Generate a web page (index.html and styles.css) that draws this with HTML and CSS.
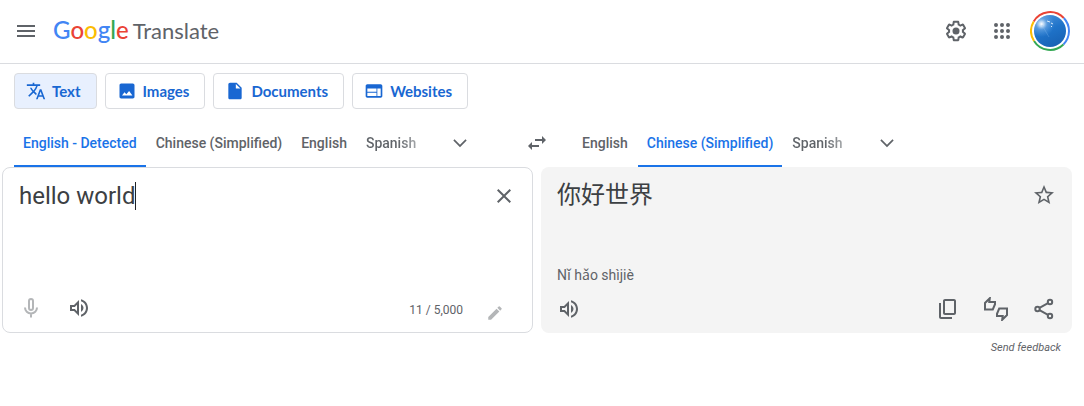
FILE: index.html
```html
<!DOCTYPE html>
<html lang="en">
<head>
<meta charset="utf-8">
<meta name="viewport" content="width=device-width, initial-scale=1">
<title>Google Translate</title>
<link rel="stylesheet" href="styles.css">
</head>
<body>
<header class="header">
  <button class="icon-button menu" aria-label="Main menu"><svg class="icon" viewBox="0 0 24 24"><path d="M3 18h18v-2H3v2zm0-5h18v-2H3v2zm0-7v2h18V6H3z"/></svg></button>
  <a class="brand" href="#"><span class="google"><span class="blue">G</span><span class="red">o</span><span class="yellow">o</span><span class="blue">g</span><span class="green">l</span><span class="red">e</span></span><span class="product">Translate</span></a>
  <div class="account">
    <button class="icon-button" aria-label="Settings"><svg class="icon" viewBox="0 0 24 24"><path d="M13.85 22.25h-3.7c-.74 0-1.36-.54-1.45-1.27l-.27-1.89c-.27-.14-.53-.29-.79-.46l-1.8.72c-.7.26-1.47-.03-1.81-.65L2.2 15.53c-.35-.66-.2-1.44.36-1.88l1.53-1.19c-.01-.15-.02-.3-.02-.46 0-.15.01-.31.02-.46l-1.52-1.19c-.59-.45-.74-1.26-.37-1.88l1.85-3.19c.34-.62 1.11-.9 1.79-.63l1.81.73c.26-.17.52-.32.78-.46l.27-1.91c.09-.7.71-1.25 1.44-1.25h3.7c.74 0 1.36.54 1.45 1.27l.27 1.89c.27.14.53.29.79.46l1.8-.72c.71-.26 1.48.03 1.82.65l1.84 3.18c.36.66.2 1.44-.36 1.88l-1.52 1.19c.01.15.02.3.02.46s-.01.31-.02.46l1.52 1.19c.56.45.72 1.23.37 1.86l-1.86 3.22c-.34.62-1.11.9-1.8.63l-1.8-.72c-.26.17-.52.32-.78.46l-.27 1.91c-.1.68-.72 1.22-1.46 1.22zm-3.23-2h2.76l.37-2.55.53-.22c.44-.18.88-.44 1.34-.78l.45-.34 2.38.96 1.38-2.4-2.03-1.58.07-.56c.03-.26.06-.51.06-.78s-.03-.53-.06-.78l-.07-.56 2.03-1.58-1.39-2.4-2.39.96-.45-.35c-.42-.32-.87-.58-1.33-.77l-.52-.22-.37-2.55h-2.76l-.37 2.55-.53.21c-.44.19-.88.44-1.34.79l-.45.33-2.38-.95-1.39 2.39 2.03 1.58-.07.56a7 7 0 0 0-.06.79c0 .26.02.53.06.78l.07.56-2.03 1.58 1.38 2.4 2.39-.96.45.35c.43.33.86.58 1.33.77l.53.22.38 2.55z"/><circle cx="12" cy="12" r="3.5"/></svg></button>
    <button class="icon-button" aria-label="Google apps"><svg class="icon" viewBox="0 0 24 24"><path d="M6 8a2 2 0 1 0 0-4 2 2 0 0 0 0 4zm6 12a2 2 0 1 0 0-4 2 2 0 0 0 0 4zm-6 0a2 2 0 1 0 0-4 2 2 0 0 0 0 4zm0-6a2 2 0 1 0 0-4 2 2 0 0 0 0 4zm6 0a2 2 0 1 0 0-4 2 2 0 0 0 0 4zm6-6a2 2 0 1 0 0-4 2 2 0 0 0 0 4zm-6 0a2 2 0 1 0 0-4 2 2 0 0 0 0 4zm6 6a2 2 0 1 0 0-4 2 2 0 0 0 0 4zm0 6a2 2 0 1 0 0-4 2 2 0 0 0 0 4z"/></svg></button>
    <button class="avatar" aria-label="Google Account">
      <svg class="avatar-picture" viewBox="0 0 40 40">
        <defs>
          <linearGradient id="sky" x1="0.2" y1="0" x2="0.65" y2="1"><stop offset="0" stop-color="#4a91da"/><stop offset="0.5" stop-color="#1f73c9"/><stop offset="1" stop-color="#1862b4"/></linearGradient>
          <radialGradient id="sun" cx="11.5" cy="13" r="13" gradientUnits="userSpaceOnUse"><stop offset="0" stop-color="#fff"/><stop offset="0.2" stop-color="#d5e9fb" stop-opacity="0.8"/><stop offset="0.45" stop-color="#8fc0f0" stop-opacity="0.4"/><stop offset="1" stop-color="#79b3ed" stop-opacity="0"/></radialGradient>
        </defs>
        <g fill="none" stroke-width="2">
          <path d="M3.7 10.5A19 19 0 0 1 33.8 7" stroke="#ea4335"/>
          <path d="M33.8 7A19 19 0 0 1 33.4 33.5" stroke="#4285f4"/>
          <path d="M33.4 33.5A19 19 0 0 1 4 30" stroke="#34a853"/>
          <path d="M4 30A19 19 0 0 1 3.7 10.5" stroke="#fbbc04"/>
        </g>
        <circle cx="20" cy="20" r="16" fill="url(#sky)"/>
        <circle cx="20" cy="20" r="16" fill="url(#sun)"/>
        <path d="M12 14l7 12" stroke="#8abdf0" stroke-opacity="0.3" fill="none"/>
        <path d="M17 10l3 1M21 12l2 1M21 15l1 1" stroke="#d8eafb" fill="none"/>
      </svg>
    </button>
  </div>
</header>

<main>
  <nav class="modes" aria-label="Translation types">
    <button class="mode mode-active"><svg class="mode-icon" viewBox="0 0 24 24"><path d="M12.87 15.07l-2.54-2.51.03-.03A17.52 17.52 0 0 0 14.07 6H17V4h-7V2H8v2H1v1.99h11.17C11.5 7.92 10.44 9.75 9 11.35 8.07 10.32 7.3 9.19 6.69 8h-2c.73 1.63 1.73 3.17 2.98 4.56l-5.09 5.02L4 19l5-5 3.11 3.11.76-2.04zM18.5 10h-2L12 22h2l1.12-3h4.75L21 22h2l-4.5-12zm-2.62 7l1.62-4.33L19.12 17h-3.24z"/></svg>Text</button>
    <button class="mode"><svg class="mode-icon" viewBox="0 0 24 24"><path d="M21 19V5c0-1.100-.9-2-2-2H5c-1.100 0-2 .9-2 2v14c0 1.100.9 2 2 2h14c1.100 0 2-.9 2-2zM6 17.500l3-4 2.200 2.500 3.300-4 4 5.500z"/></svg>Images</button>
    <button class="mode"><svg class="mode-icon" viewBox="0 0 24 24"><path d="M6 2c-1.100 0-1.990.9-1.990 2L4 20c0 1.100.89 2 1.990 2H18c1.100 0 2-.9 2-2V8l-6-6H6zm7 7V3.500L18.500 9H13z"/></svg>Documents</button>
    <button class="mode"><svg class="mode-icon" viewBox="0 0 24 24"><path d="M20 4H4c-1.100 0-1.990.9-1.990 2L2 18c0 1.100.9 2 2 2h16c1.100 0 2-.9 2-2V6c0-1.100-.9-2-2-2zm-5 14H4v-4h11v4zm0-5H4V9h11v4zm5 5h-4V9h4v9z"/></svg>Websites</button>
  </nav>

  <div class="workspace">
    <div class="languages">
      <div class="language-list">
        <button class="tab tab-active">English - Detected</button>
        <button class="tab">Chinese (Simplified)</button>
        <button class="tab">English</button>
        <button class="tab tab-fade">Spanish</button>
        <button class="icon-button more" aria-label="More source languages"><svg class="icon chevron" viewBox="0 0 24 24"><path d="M5.410 7.590L4 9l8 8 8-8-1.410-1.410L12 14.170z"/></svg></button>
      </div>
      <button class="icon-button" aria-label="Swap languages"><svg class="icon" viewBox="0 0 24 24"><path d="M6.990 11L3 15l3.990 4v-3H14v-2H6.990v-3zM21 9l-3.990-4v3H10v2h7.010v3L21 9z"/></svg></button>
      <div class="language-list">
        <button class="tab">English</button>
        <button class="tab tab-active">Chinese (Simplified)</button>
        <button class="tab tab-fade">Spanish</button>
        <button class="icon-button more" aria-label="More target languages"><svg class="icon chevron" viewBox="0 0 24 24"><path d="M5.410 7.590L4 9l8 8 8-8-1.410-1.410L12 14.170z"/></svg></button>
      </div>
    </div>

    <div class="panels">
      <section class="panel source" aria-label="Source text">
        <div class="panel-main">
          <div class="entry"><textarea class="source-text" aria-label="Source text" rows="2" spellcheck="false">hello world</textarea><span class="caret"></span></div>
          <button class="icon-button" aria-label="Clear source text"><svg class="icon" viewBox="0 0 24 24"><path d="M19 6.410L17.590 5 12 10.590 6.410 5 5 6.410 10.590 12 5 17.590 6.410 19 12 13.410 17.590 19 19 17.590 13.410 12z"/></svg></button>
        </div>
        <div class="actions">
          <button class="icon-button muted" aria-label="Translate by voice" disabled><svg class="icon" viewBox="0 0 24 24"><g fill="none" stroke="currentColor" stroke-width="2"><rect x="10" y="3" width="4" height="11" rx="2"/><path d="M6 11.500a6 6 0 0 0 12 0M12 17.500V21.500"/></g></svg></button>
          <button class="icon-button" aria-label="Listen to source text"><svg class="icon" viewBox="0 0 24 24"><path d="M3 9v6h4l5 5V4L7 9H3zm7-.17v6.34L7.83 13H5v-2h2.83L10 8.83zM16.5 12c0-1.77-1.02-3.29-2.500-4.03v8.05A4.47 4.47 0 0 0 16.500 12zM14 3.230v2.060c2.890.86 5 3.540 5 6.710s-2.110 5.850-5 6.710v2.060c4.010-.91 7-4.490 7-8.770s-2.990-7.860-7-8.770z"/></svg></button>
          <span class="counter">11 / 5,000</span>
          <button class="icon-button muted pencil" aria-label="Handwriting input"><svg class="icon-small" viewBox="0 0 24 24"><path d="M3 17.250V21h3.750L17.810 9.940l-3.750-3.750L3 17.250zM20.710 7.040a1 1 0 0 0 0-1.410l-2.340-2.340a1 1 0 0 0-1.410 0l-1.830 1.830 3.750 3.750 1.830-1.830z"/></svg></button>
        </div>
      </section>

      <section class="panel target" aria-label="Translation">
        <div class="panel-main">
          <p class="result" lang="zh-CN">你好世界</p>
          <button class="icon-button" aria-label="Save translation"><svg class="icon" viewBox="0 0 24 24"><path d="M22 9.240l-7.190-.62L12 2 9.190 8.630 2 9.240l5.460 4.730L5.820 21 12 17.270 18.180 21l-1.630-7.030L22 9.240zM12 15.400l-3.760 2.270 1-4.280-3.320-2.880 4.380-.38L12 6.100l1.710 4.040 4.380.38-3.320 2.880 1 4.280L12 15.400z"/></svg></button>
        </div>
        <p class="romanized">Nǐ hǎo shìjiè</p>
        <div class="actions">
          <button class="icon-button" aria-label="Listen to translation"><svg class="icon" viewBox="0 0 24 24"><path d="M3 9v6h4l5 5V4L7 9H3zm7-.17v6.34L7.83 13H5v-2h2.83L10 8.83zM16.5 12c0-1.77-1.02-3.29-2.500-4.03v8.05A4.47 4.47 0 0 0 16.500 12zM14 3.230v2.060c2.890.86 5 3.540 5 6.710s-2.110 5.850-5 6.710v2.060c4.010-.91 7-4.490 7-8.770s-2.990-7.860-7-8.770z"/></svg></button>
          <button class="icon-button push" aria-label="Copy translation"><svg class="icon" viewBox="0 0 24 24"><path d="M18 2H9c-1.100 0-2 .9-2 2v12c0 1.100.9 2 2 2h9c1.100 0 2-.9 2-2V4c0-1.100-.9-2-2-2zm0 14H9V4h9v12zM3 15V6h2v14h11v2H5c-1.100 0-2-.9-2-2v-5z"/></svg></button>
          <button class="icon-button" aria-label="Rate this translation"><svg class="icon" viewBox="0 0 24 24"><g fill="none" stroke="currentColor" stroke-width="2"><path d="M1 12.500V6L5.800 1.200 5.300 5H11v2.200L8.800 12.500z"/><path d="M23 11.500V18l-4.800 4.800.5-3.800H13v-2.200l2.200-5.300z"/></g></svg></button>
          <button class="icon-button" aria-label="Share translation"><svg class="icon" viewBox="0 0 24 24"><g fill="none" stroke="currentColor" stroke-width="2"><circle cx="5.500" cy="12" r="2.200"/><circle cx="18" cy="5" r="2.200"/><circle cx="18" cy="19" r="2.200"/><path d="M7.500 10.900L16 6.100M7.500 13.100L16 17.900"/></g></svg></button>
        </div>
      </section>
    </div>
    <div class="feedback"><a href="#">Send feedback</a></div>
  </div>
</main>
</body>
</html>
```
FILE: styles.css
```css
* { box-sizing: border-box; }
body {
  margin: 0;
  background: #fff;
  color: #3c4043;
  font-family: Roboto, "Noto Sans CJK SC", sans-serif;
}
button {
  margin: 0;
  padding: 0;
  border: 0;
  background: none;
  font-family: inherit;
  cursor: pointer;
}
p { margin: 0; }
svg { display: block; fill: currentColor; flex: none; }

.icon { width: 24px; height: 24px; }
.icon-small { width: 18px; height: 18px; }
.icon-button {
  display: flex;
  flex: none;
  align-items: center;
  justify-content: center;
  width: 48px;
  height: 48px;
  color: #5f6368;
}
.muted { color: #b4b6b8; }

/* Header */
.header {
  display: flex;
  align-items: center;
  height: 64px;
  padding: 0 14px 2px 2px;
  border-bottom: 1px solid #dadce0;
}
.brand {
  display: flex;
  align-items: baseline;
  gap: 4px;
  padding-left: 3px;
  color: #5f6368;
  font-family: Lato, sans-serif;
  font-size: 22px;
  line-height: 28px;
  text-decoration: none;
}
.google { font-size: 24px; font-weight: 500; }
.blue { color: #4285f4; }
.red { color: #ea4335; }
.yellow { color: #fbbc04; }
.green { color: #34a853; }
.account {
  display: flex;
  align-items: center;
  margin-left: auto;
}
.account .icon-button { width: 46px; }
.avatar { margin-left: 5px; }
.avatar-picture { width: 40px; height: 40px; }

/* Mode buttons */
.modes {
  display: flex;
  gap: 8px;
  padding: 9px 14px 10px;
}
.mode {
  display: flex;
  align-items: center;
  gap: 6px;
  height: 36px;
  padding: 0 15px 0 11px;
  border: 1px solid #dadce0;
  border-radius: 4px;
  color: #1967d2;
  font-family: Lato, sans-serif;
  font-size: 15px;
  font-weight: 700;
}
.mode-active { background: #e8f0fe; }
.mode-icon { width: 20px; height: 20px; }

/* Languages */
.workspace { padding: 0 12px 0 2px; }
.languages {
  display: grid;
  grid-template-columns: 1fr 48px 1fr;
}
.language-list {
  display: flex;
  gap: 1px;
  padding-left: 12px;
}
.tab {
  height: 48px;
  padding: 2px 9px 0;
  border-bottom: 2px solid transparent;
  color: #5f6368;
  font-size: 14px;
  font-weight: 500;
  white-space: nowrap;
}
.tab-active { border-color: #1a73e8; color: #1a73e8; }
.tab-fade {
  background: linear-gradient(90deg, #5f6368 60%, #c4c6c8) text;
  color: transparent;
}
.more { margin-left: 10px; }
.chevron { width: 20px; height: 20px; }

/* Panels */
.panels {
  display: grid;
  grid-template-columns: 1fr 1fr;
  gap: 8px;
}
.panel {
  display: flex;
  flex-direction: column;
  min-height: 166px;
  padding: 4px 4px 0;
  border-radius: 8px;
}
.source { border: 1px solid #dadce0; }
.target { background: #f4f4f4; }
.panel-main {
  display: flex;
  flex: 1;
  align-items: flex-start;
}
.entry { position: relative; flex: 1; }
.source-text {
  display: block;
  width: 100%;
  padding: 8px 0 0 12px;
  border: 0;
  outline: 0;
  background: none;
  color: #3c4043;
  font-family: inherit;
  font-size: 24px;
  line-height: 32px;
  resize: none;
}
.caret {
  position: absolute;
  top: 10px;
  left: 128px;
  width: 1px;
  height: 28px;
  background: #202124;
}
.result {
  flex: 1;
  padding: 8px 0 0 12px;
  font-size: 24px;
  line-height: 32px;
}
.romanized {
  padding: 0 12px;
  color: #5f6368;
  font-size: 14px;
  line-height: 20px;
}
.actions { display: flex; align-items: center; }
.push, .counter { margin-left: auto; }
.counter {
  padding: 4px 8px 0 0;
  color: #5f6368;
  font-size: 12px;
}
.pencil { padding-top: 10px; margin-right: 9px; }
.feedback {
  padding: 7px 11px 0;
  text-align: right;
  font-size: 11px;
  line-height: 16px;
}
.feedback a { color: #5f6368; font-style: italic; text-decoration: none; }
```
